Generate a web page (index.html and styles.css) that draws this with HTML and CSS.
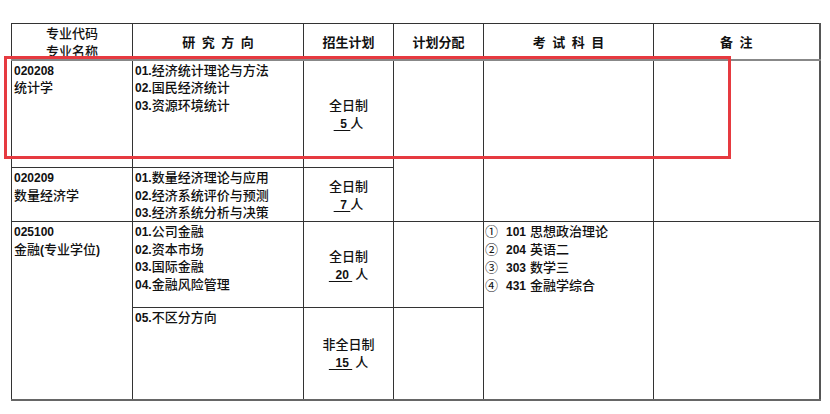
FILE: index.html
```html
<!DOCTYPE html>
<html lang="zh">
<head>
<meta charset="utf-8">
<link rel="stylesheet" href="styles.css">
</head>
<body>
<div class="page">
  <table class="plan">
    <colgroup>
      <col class="c1"><col class="c2"><col class="c3"><col class="c4"><col class="c5"><col class="c6">
    </colgroup>
    <tr class="head">
      <th class="two"><div class="hwrap">专业代码<br>专业名称</div></th>
      <th>研&ensp;究&ensp;方&ensp;向</th>
      <th>招生计划</th>
      <th>计划分配</th>
      <th>考&ensp;试&ensp;科&ensp;目</th>
      <th>备&ensp;注</th>
    </tr>
    <tr class="r1">
      <td class="top"><span class="num">020208</span><br>统计学</td>
      <td class="top"><span class="num">01.</span>经济统计理论与方法<br><span class="num">02.</span>国民经济统计<br><span class="num">03.</span>资源环境统计</td>
      <td class="mid">全日制<br><u class="num">&nbsp;&nbsp;5&nbsp;</u>人</td>
      <td rowspan="2"></td>
      <td rowspan="2"></td>
      <td rowspan="2"></td>
    </tr>
    <tr class="r2">
      <td class="top"><span class="num">020209</span><br>数量经济学</td>
      <td class="top"><span class="num">01.</span>数量经济理论与应用<br><span class="num">02.</span>经济系统评价与预测<br><span class="num">03.</span>经济系统分析与决策</td>
      <td class="mid">全日制<br><u class="num">&nbsp;&nbsp;7&nbsp;</u>人</td>
    </tr>
    <tr class="r3">
      <td class="top" rowspan="2"><span class="num">025100</span><br>金融<span class="num">(</span>专业学位<span class="num">)</span></td>
      <td class="top"><span class="num">01.</span>公司金融<br><span class="num">02.</span>资本市场<br><span class="num">03.</span>国际金融<br><span class="num">04.</span>金融风险管理</td>
      <td class="mid">全日制<br><u class="num">&nbsp;&nbsp;20&nbsp;</u>&nbsp;人</td>
      <td></td>
      <td class="top exam" rowspan="2"><span class="circ">①</span><span class="num code">101</span>思想政治理论<br><span class="circ">②</span><span class="num code">204</span>英语二<br><span class="circ">③</span><span class="num code">303</span>数学三<br><span class="circ">④</span><span class="num code">431</span>金融学综合</td>
      <td rowspan="2"></td>
    </tr>
    <tr class="r4">
      <td class="top"><span class="num">05.</span>不区分方向</td>
      <td class="mid">非全日制<br><u class="num">&nbsp;&nbsp;15&nbsp;</u>&nbsp;人</td>
      <td></td>
    </tr>
  </table>
  <div class="mark"></div>
</div>
</body>
</html>
```

FILE: styles.css
```css
html, body {
  margin: 0;
  padding: 0;
  background: #ffffff;
}

.page {
  position: relative;
  padding: 23px 0 0 11px;
  font-family: "Noto Sans CJK SC", "Liberation Sans", sans-serif;
  font-size: 13px;
  font-weight: 500;
  color: #111;
}

.plan {
  border-collapse: collapse;
  table-layout: fixed;
  width: 808px;
  border: 1px solid #333;
  border-right: 2px solid #555;
  border-bottom: 2px solid #666;
}

.c1 { width: 121px; }
.c2 { width: 171px; }
.c3 { width: 90px; }
.c4 { width: 90px; }
.c5 { width: 170px; }
.c6 { width: 166px; }

.plan th,
.plan td {
  border: 1px solid #333;
  padding: 0 2px;
  line-height: 17.5px;
}

.plan th {
  font-weight: 600;
  text-align: center;
  vertical-align: middle;
  height: 33px;
  line-height: 17px;
  padding-top: 1px;
  border-bottom: 2px solid #888;
}

.plan th.two {
  vertical-align: top;
  padding-top: 0;
}

.hwrap {
  height: 33px;
  line-height: 18px;
  margin-top: 0;
  overflow: visible;
  font-weight: 500;
}

.head { height: 36px; }
.r1 { height: 108px; }
.r2 { height: 54px; }
.r3 { height: 86px; }
.r4 { height: 92px; }

.plan td.top {
  vertical-align: top;
  padding-top: 0;
  text-align: left;
}

.plan td.mid {
  vertical-align: middle;
  text-align: center;
  line-height: 18px;
}

.plan td.exam {
  padding-left: 1px;
  line-height: 18px;
}

.num {
  font-family: "Liberation Sans", "Noto Sans CJK SC", sans-serif;
  font-weight: bold;
  font-size: 12px;
  line-height: 12px;
}

.circ {
  display: inline-block;
  width: 21px;
  line-height: 12px;
  font-weight: 400;
}

.code {
  margin-right: 4px;
}

u.num {
  text-decoration: underline;
  text-decoration-thickness: 1px;
  text-underline-offset: 2px;
}

.mark {
  position: absolute;
  left: 4px;
  top: 56px;
  width: 727px;
  height: 103px;
  box-sizing: border-box;
  border: 3px solid #e63a40;
}
```
